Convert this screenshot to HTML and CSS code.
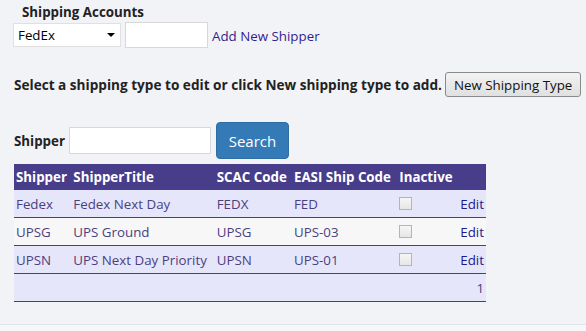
FILE: index.html
```html
<!DOCTYPE html>
<html lang="en">
<head>
    <meta charset="UTF-8">
    <meta name="viewport" content="width=device-width, initial-scale=1.0">
    <title>Shipping Accounts</title>
    <link rel="stylesheet" href="styles.css">
</head>
<body>
    <div class="page">
        <h3 class="title">Shipping Accounts</h3>
        <div class="account-row">
            <span class="select-wrap">
                <select class="shipper-select">
                    <option>FedEx</option>
                    <option>UPS</option>
                </select>
                <svg class="caret" width="8" height="4" viewBox="0 0 8 4"><path d="M0 0h8L4 4z" fill="#000"/></svg>
            </span>
            <input type="text" class="account-input">
            <a href="#" class="add-link">Add New Shipper</a>
        </div>

        <div class="intro">
            <span class="intro-text">Select a shipping type to edit or click New shipping type to add.</span>
            <button class="btn-new">New Shipping Type</button>
        </div>

        <div class="search-row">
            <label class="search-label">Shipper</label>
            <input type="text" class="search-input">
            <button class="btn-search">Search</button>
        </div>

        <table class="grid">
            <thead>
                <tr>
                    <th class="c-shipper">Shipper</th>
                    <th class="c-title">ShipperTitle</th>
                    <th class="c-scac">SCAC Code</th>
                    <th class="c-easi">EASI Ship Code</th>
                    <th class="c-inactive">Inactive</th>
                    <th class="c-edit"></th>
                </tr>
            </thead>
            <tbody>
                <tr class="row">
                    <td>Fedex</td>
                    <td>Fedex Next Day</td>
                    <td>FEDX</td>
                    <td>FED</td>
                    <td><input type="checkbox" class="chk" disabled></td>
                    <td class="c-edit"><a href="#" class="edit-link">Edit</a></td>
                </tr>
                <tr class="row alt">
                    <td>UPSG</td>
                    <td>UPS Ground</td>
                    <td>UPSG</td>
                    <td>UPS-03</td>
                    <td><input type="checkbox" class="chk" disabled></td>
                    <td class="c-edit"><a href="#" class="edit-link">Edit</a></td>
                </tr>
                <tr class="row">
                    <td>UPSN</td>
                    <td>UPS Next Day Priority</td>
                    <td>UPSN</td>
                    <td>UPS-01</td>
                    <td><input type="checkbox" class="chk" disabled></td>
                    <td class="c-edit"><a href="#" class="edit-link">Edit</a></td>
                </tr>
                <tr class="row pager">
                    <td colspan="6">1</td>
                </tr>
            </tbody>
        </table>
    </div>
    <div class="footer"></div>
</body>
</html>
```
FILE: styles.css
```css
body {
    margin: 0;
    background: #f2f3f7;
    font-family: "Open Sans", "Noto Sans", sans-serif;
    font-size: 13.33px;
    color: #222;
}

.page {
    padding: 3px 0 0 13px;
    height: 321px;
}

.title {
    margin: 0 0 1px 9px;
    font-size: 13.33px;
    font-weight: bold;
    line-height: 18px;
}

.account-row {
    display: flex;
    align-items: center;
    gap: 4px;
}

.select-wrap {
    position: relative;
    display: inline-block;
}

.shipper-select {
    appearance: none;
    width: 108px;
    height: 24px;
    padding: 0 0 0 4px;
    border: 1px solid #e0e0e0;
    background: #fff;
    font-family: inherit;
    font-size: 13.33px;
    color: #000;
}

.caret {
    position: absolute;
    right: 6px;
    top: 10px;
    pointer-events: none;
}

.account-input {
    width: 83px;
    height: 26px;
    box-sizing: border-box;
    border: 1px solid #d8d8d8;
    background: #fff;
}

.add-link {
    color: #341e8f;
    text-decoration: none;
    padding-top: 2px;
}

.intro {
    display: flex;
    align-items: center;
    gap: 3px;
    margin-top: 24px;
    margin-left: 1px;
    white-space: nowrap;
}

.intro-text {
    font-weight: bold;
    font-size: 13.6px;
}

.btn-new {
    flex-shrink: 0;
    height: 25px;
    padding: 0 8px;
    border: 1px solid #8a8a8a;
    border-radius: 3px;
    background: linear-gradient(#f2f2f2, #e0e0e0);
    font-family: inherit;
    font-size: 13.33px;
    color: #111;
}

.search-row {
    display: flex;
    align-items: center;
    gap: 4px;
    margin-top: 25px;
    margin-left: 1px;
}

.search-label {
    font-weight: bold;
}

.search-input {
    width: 142px;
    height: 27px;
    box-sizing: border-box;
    border: 1px solid #d8d8d8;
    background: #fff;
}

.btn-search {
    width: 73px;
    height: 37px;
    margin-left: 1px;
    border: 1px solid #2e6da4;
    border-radius: 4px;
    background: #337ab7;
    color: #fff;
    font-family: inherit;
    font-size: 15px;
}

.grid {
    width: 472px;
    margin-top: 5px;
    margin-left: 1px;
    border-collapse: collapse;
    color: #4b3f80;
}

.grid th {
    height: 26px;
    padding: 0 2px;
    background: #483d8b;
    color: #fff;
    font-weight: bold;
    text-align: left;
    white-space: nowrap;
}

.grid td {
    height: 27px;
    padding: 0 2px;
    border-bottom: 1px solid #483d8b;
    background: #e6e6fa;
    white-space: nowrap;
}

.grid .alt td {
    background: #f7f7f7;
}

.grid .c-edit {
    text-align: right;
}

.grid .pager td {
    text-align: right;
}

.chk {
    appearance: none;
    width: 13px;
    height: 13px;
    margin: 0;
    border: 1px solid #b5b5b5;
    background: linear-gradient(#f6f6f6, #e6e6e6);
    vertical-align: -1px;
}

.edit-link {
    color: #1b1b8c;
    text-decoration: none;
}

.footer {
    border-top: 1px solid #dfe3ee;
    background: #f7f7f7;
    height: 10px;
}
```
